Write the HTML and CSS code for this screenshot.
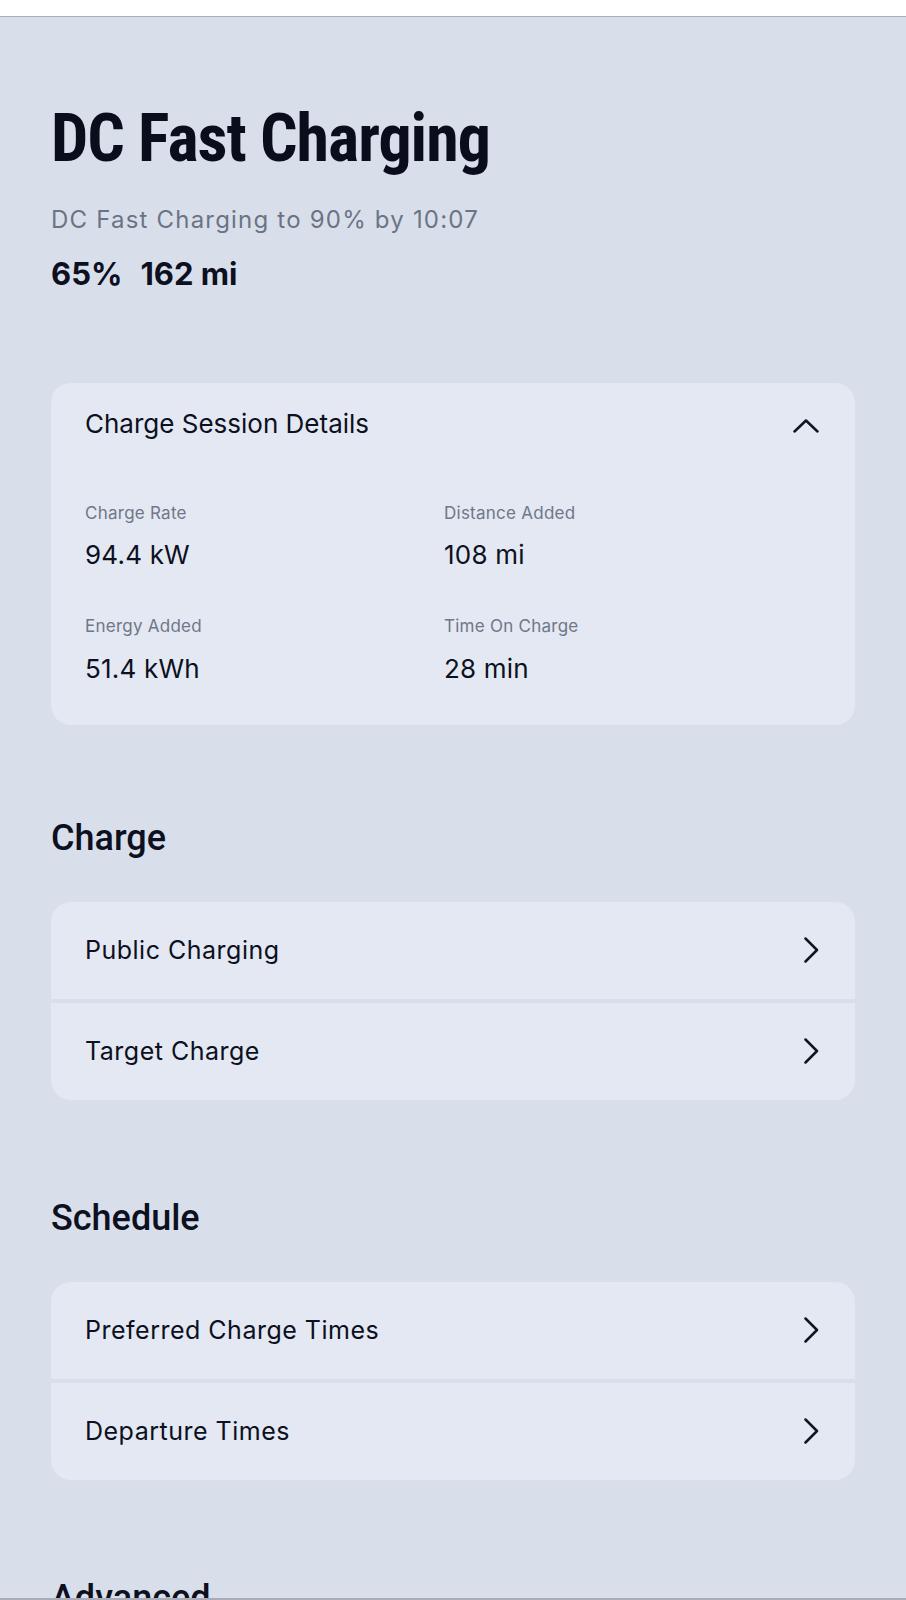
FILE: index.html
```html
<!DOCTYPE html>
<html lang="en">
<head>
  <meta charset="UTF-8" />
  <meta name="viewport" content="width=device-width, initial-scale=1.0"/>
  <title>DC Fast Charging</title>
  <link rel="stylesheet" href="styles.css">
</head>
<body>
  <div class="topbar"></div>

  <main class="page">
    <h1 class="title">DC Fast Charging</h1>
    <p class="status">DC Fast Charging to 90% by 10:07</p>
    <div class="stats">
      <span>65%</span>
      <span>162 mi</span>
    </div>

    <section class="details">
      <div class="details-head">
        <span>Charge Session Details</span>
        <svg class="chevron-up" width="26" height="14" viewBox="0 0 26 14">
          <path d="M1.5 12.5 L13 1.5 L24.5 12.5" />
        </svg>
      </div>
      <div class="details-grid">
        <div class="item">
          <div class="label">Charge Rate</div>
          <div class="value">94.4 kW</div>
        </div>
        <div class="item">
          <div class="label">Distance Added</div>
          <div class="value">108 mi</div>
        </div>
        <div class="item">
          <div class="label">Energy Added</div>
          <div class="value">51.4 kWh</div>
        </div>
        <div class="item">
          <div class="label">Time On Charge</div>
          <div class="value">28 min</div>
        </div>
      </div>
    </section>

    <section class="group">
      <h2>Charge</h2>
      <div class="list">
        <a class="row" href="#">
          <span>Public Charging</span>
          <svg class="chevron" width="15" height="26" viewBox="0 0 15 26"><path d="M1.5 1.5 L13 13 L1.5 24.5" /></svg>
        </a>
        <a class="row" href="#">
          <span>Target Charge</span>
          <svg class="chevron" width="15" height="26" viewBox="0 0 15 26"><path d="M1.5 1.5 L13 13 L1.5 24.5" /></svg>
        </a>
      </div>
    </section>

    <section class="group">
      <h2>Schedule</h2>
      <div class="list">
        <a class="row" href="#">
          <span>Preferred Charge Times</span>
          <svg class="chevron" width="15" height="26" viewBox="0 0 15 26"><path d="M1.5 1.5 L13 13 L1.5 24.5" /></svg>
        </a>
        <a class="row" href="#">
          <span>Departure Times</span>
          <svg class="chevron" width="15" height="26" viewBox="0 0 15 26"><path d="M1.5 1.5 L13 13 L1.5 24.5" /></svg>
        </a>
      </div>
    </section>

    <section class="group">
      <h2>Advanced</h2>
    </section>
  </main>

  <div class="frame-bottom"></div>
</body>
</html>
```

FILE: styles.css
```css
body {
  margin: 0;
  background: #d9dfea;
  font-family: Inter, Roboto, sans-serif;
  color: #0c1020;
}

.topbar {
  height: 16px;
  background: #fff;
  border-bottom: 1px solid #a9aeb7;
}

.page {
  padding: 89px 51px 0;
}

.title {
  margin: 0;
  font-family: "Roboto Condensed", "Liberation Sans Narrow", sans-serif;
  font-weight: 700;
  font-size: 66px;
  line-height: 1;
  letter-spacing: -1px;
  color: #0a0e1c;
}

.status {
  margin: 34px 0 0;
  font-size: 24px;
  line-height: 1.15;
  letter-spacing: 1.2px;
  color: #6b7486;
}

.stats {
  margin-top: 24px;
  display: flex;
  gap: 18px;
  font-size: 31px;
  line-height: 1;
  font-weight: 700;
}

.details {
  margin-top: 94px;
  background: #e3e8f2;
  border-radius: 20px;
  padding: 25px 36px 41px 34px;
}

.details-head {
  display: flex;
  justify-content: space-between;
  align-items: center;
  font-size: 26px;
  line-height: 1.2;
}

.chevron-up,
.chevron {
  fill: none;
  stroke: #111522;
  stroke-width: 2.5;
  stroke-linecap: round;
  stroke-linejoin: round;
}

.chevron-up {
  margin-top: 5px;
}

.details-grid {
  margin-top: 64px;
  display: grid;
  grid-template-columns: 359px 1fr;
  row-gap: 46px;
}

.label {
  font-size: 17px;
  line-height: 1.2;
  letter-spacing: 0.25px;
  color: #6f7789;
}

.value {
  margin-top: 16px;
  font-size: 26px;
  line-height: 1.2;
  letter-spacing: 0.2px;
}

.group {
  margin-top: 92px;
}

.group + .group {
  margin-top: 97px;
}

.group h2 {
  margin: 0;
  font-family: Roboto, sans-serif;
  font-weight: 500;
  font-size: 36px;
  line-height: 42px;
  letter-spacing: 0;
}

.list {
  margin-top: 43px;
  display: flex;
  flex-direction: column;
  gap: 4px;
  border-radius: 20px;
  overflow: hidden;
}

.row {
  display: flex;
  justify-content: space-between;
  align-items: center;
  height: 97px;
  padding: 0 36px 0 34px;
  background: #e3e8f2;
  font-size: 25px;
  letter-spacing: 0.5px;
  color: inherit;
  text-decoration: none;
}

.frame-bottom {
  position: fixed;
  left: 0;
  right: 0;
  bottom: 0;
  height: 2px;
  background: #a7acb6;
}
```
